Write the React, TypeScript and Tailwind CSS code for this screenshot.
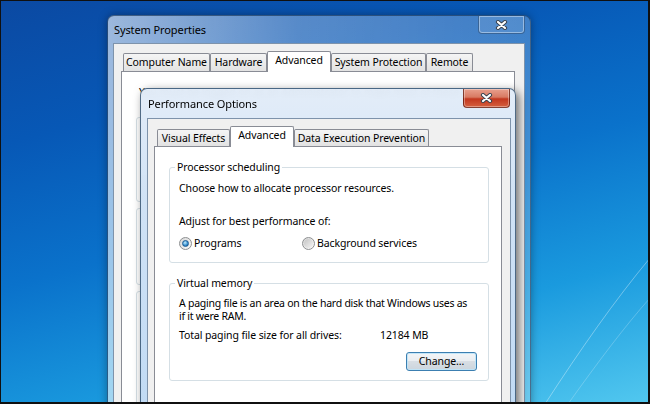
import React from 'react';

function CloseGlyph() {
  return (
    <svg width="13" height="10" viewBox="0 0 13 10">
      <path d="M3 2L10 8M10 2L3 8" stroke="#3a4450" strokeWidth="4.2" strokeLinecap="round" />
      <path d="M3 2L10 8M10 2L3 8" stroke="#ffffff" strokeWidth="2.2" strokeLinecap="round" />
    </svg>
  );
}

function Radio({ checked }: { checked?: boolean }) {
  return (
    <span className="flex h-[13px] w-[13px] shrink-0 items-center justify-center rounded-full border border-[#8d8f91] bg-[linear-gradient(135deg,#d8d8d8,#fafafa)]">
      {checked ? (
        <span className="h-[7px] w-[7px] rounded-full border border-[#1b5b94] bg-[radial-gradient(circle_at_40%_35%,#c4ecfc_0%,#3c93d2_55%,#0d4f8c_100%)]" />
      ) : (
        <span className="h-[9px] w-[9px] rounded-full bg-[linear-gradient(135deg,#c4c4c4,#f4f4f4)]" />
      )}
    </span>
  );
}

function Tab({ label, className, active }: { label: string; className: string; active?: boolean }) {
  if (active) {
    return (
      <div className={`relative z-10 -mb-px flex justify-center rounded-t-[2px] border border-b-0 border-[#898c95] bg-white pt-px leading-[15px] ${className}`}>
        {label}
      </div>
    );
  }
  return (
    <div className={`flex justify-center rounded-t-[2px] border border-b-0 border-[#898c95] bg-[linear-gradient(to_bottom,#f5f5f5,#e2e2e2)] pt-px leading-[15px] ${className}`}>
      {label}
    </div>
  );
}

export default function App() {
  return (
    <div className="relative h-[404px] w-[650px] overflow-hidden bg-[linear-gradient(165deg,#0b49a2_0%,#0758b6_25%,#0a72cb_50%,#1a9ade_75%,#52c8ef_100%)] font-['Noto_Sans',sans-serif] text-[10.5px] tracking-[-0.1px] text-black">
      <svg className="absolute inset-0" width="650" height="404">
        <path d="M545 404 C 580 350 615 300 650 258" stroke="#ffffff" strokeOpacity="0.35" fill="none" />
        <path d="M568 404 C 598 362 625 326 650 298" stroke="#ffffff" strokeOpacity="0.22" fill="none" />
      </svg>

      {/* System Properties */}
      <div className="absolute left-[107px] top-[15px] flex h-[400px] w-[424px] flex-col rounded-t-[7px] border border-[#1c3b5e]/70 bg-[linear-gradient(to_right,rgba(255,255,255,0.6),rgba(255,255,255,0.32)_45%,rgba(255,255,255,0.22))] shadow-[0_0_8px_rgba(0,0,0,0.35)]">
        <div className="flex h-[27px] shrink-0">
          <div className="flex-1 pl-[6px] pt-[6px] text-[11px] leading-[16px]">System Properties</div>
          <div className="mr-[5px] flex h-[18px] w-[47px] items-center justify-center rounded-b-[4px] border border-t-0 border-[#284a72]/60 bg-white/10 shadow-[inset_0_0_0_1px_rgba(255,255,255,0.4)]">
            <CloseGlyph />
          </div>
        </div>
        <div className="mx-[5px] flex flex-1 flex-col border border-[#7e93ab] bg-[#f0f0f0] pl-[7px] pr-[9px] pt-[7px]">
          <div className="flex h-[20px] items-end pl-[2px]">
            <Tab label="Computer Name" className="h-[18px] w-[87px]" />
            <Tab label="Hardware" className="h-[18px] w-[57px]" />
            <Tab label="Advanced" className="h-[21px] w-[64px]" active />
            <Tab label="System Protection" className="h-[18px] w-[95px]" />
            <Tab label="Remote" className="h-[18px] w-[47px]" />
          </div>
          <div className="flex flex-1 flex-col border border-[#898c95] bg-white pl-[14px] pr-[14px] pt-[13px]">
            <div className="ml-[3px] whitespace-nowrap leading-[14px]">You must be logged on as an Administrator to make most of these changes.</div>
            <div className="mt-[18px] h-[85px] rounded-[3px] border border-[#d5dfe5]" />
            <div className="mt-[6px] h-[77px] rounded-[3px] border border-[#d5dfe5]" />
            <div className="mt-[6px] h-[120px] rounded-[3px] border border-[#d5dfe5]" />
          </div>
        </div>
      </div>

      {/* Performance Options */}
      <div className="absolute left-[140px] top-[88px] flex h-[330px] w-[376px] flex-col rounded-t-[7px] border border-[#22405f]/75 bg-[linear-gradient(to_bottom,rgba(226,236,248,0.96),rgba(206,225,245,0.97)_35%,rgba(190,217,244,0.97))] shadow-[3px_3px_10px_rgba(0,0,0,0.55)] backdrop-blur-[3px]">
        <div className="flex h-[29px] shrink-0">
          <div className="flex-1 pl-[7px] pt-[7px] text-[11px] leading-[16px]">Performance Options</div>
          <div className="mr-[5px] flex h-[19px] w-[47px] items-center justify-center rounded-b-[4px] border border-t-0 border-[#5a1a10]/70 bg-[linear-gradient(to_bottom,#e8a08e_0%,#d87a63_45%,#c2371f_55%,#d5603f_100%)] shadow-[inset_0_0_0_1px_rgba(255,255,255,0.35)]">
            <CloseGlyph />
          </div>
        </div>
        <div className="ml-[6px] mr-[4px] flex flex-1 flex-col border border-[#7e93ab] bg-[#f0f0f0] pl-[6px] pr-[8px] pt-[7px]">
          <div className="flex h-[20px] items-end pl-[3px]">
            <Tab label="Visual Effects" className="h-[17px] w-[73px]" />
            <Tab label="Advanced" className="h-[21px] w-[64px]" active />
            <Tab label="Data Execution Prevention" className="h-[17px] w-[135px]" />
          </div>
          <div className="flex flex-1 flex-col border border-[#898c95] bg-white pl-[14px] pr-[12px] pt-[13px]">
            <fieldset className="rounded-[3px] border border-[#d5dfe5] px-[9px] pb-[12px] pt-[7px]">
              <legend className="-ml-[4px] px-[2px] leading-[14px]">Processor scheduling</legend>
              <div className="leading-[14px]">Choose how to allocate processor resources.</div>
              <div className="mt-[19px] leading-[14px]">Adjust for best performance of:</div>
              <div className="mt-[8px] flex h-[14px] items-center">
                <div className="flex w-[123px] items-center gap-[2px]">
                  <Radio checked />
                  <span className="leading-[14px]">Programs</span>
                </div>
                <div className="flex items-center gap-[2px]">
                  <Radio />
                  <span className="leading-[14px]">Background services</span>
                </div>
              </div>
            </fieldset>
            <fieldset className="mt-[13px] rounded-[3px] border border-[#d5dfe5] px-[9px] pb-[9px] pt-[7px]">
              <legend className="-ml-[4px] px-[2px] leading-[14px]">Virtual memory</legend>
              <div className="whitespace-nowrap leading-[13px] tracking-[-0.25px]">
                A paging file is an area on the hard disk that Windows uses as
                <br />
                if it were RAM.
              </div>
              <div className="mt-[5px] flex leading-[14px]">
                <span className="w-[201px]">Total paging file size for all drives:</span>
                <span>12184 MB</span>
              </div>
              <div className="mt-[10px] flex justify-end pr-[2px]">
                <div className="flex h-[19px] w-[71px] items-center justify-center rounded-[3px] border border-[#3c7fb1] bg-[linear-gradient(to_bottom,#f3f5f7_0%,#e9edf1_50%,#d8dee4_50%,#ccd5dd_100%)] shadow-[inset_0_0_0_1px_rgba(190,228,248,0.9)]">
                  Change...
                </div>
              </div>
            </fieldset>
          </div>
        </div>
      </div>

      <div className="pointer-events-none absolute inset-0 border-b-2 border-l border-r-2 border-t border-[#101010]" />
    </div>
  );
}
